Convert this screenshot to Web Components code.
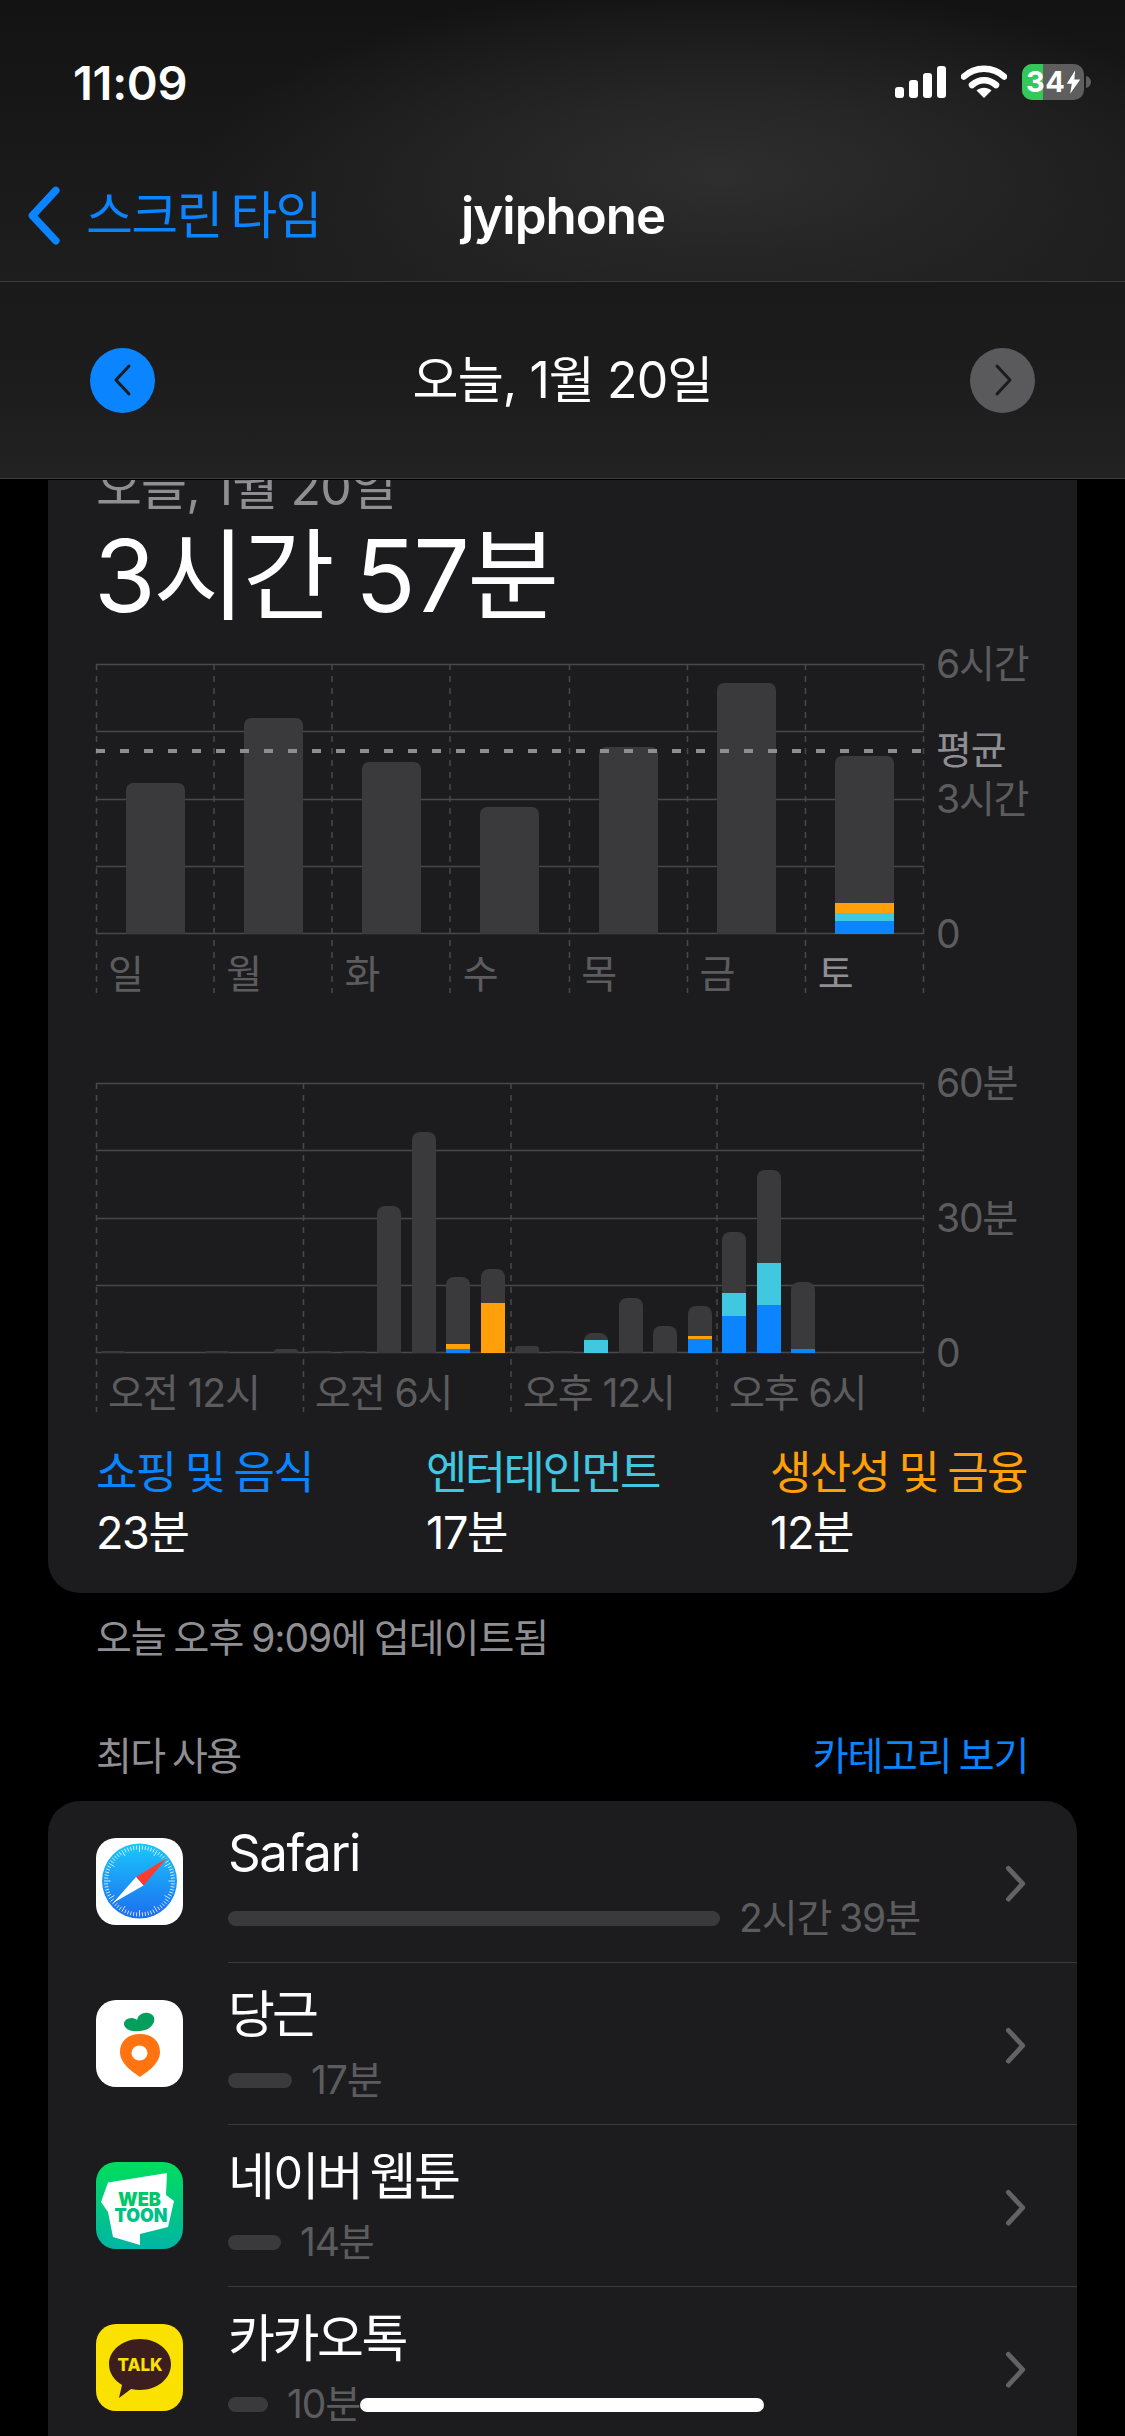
<!DOCTYPE html>
<html lang="ko"><head><meta charset="utf-8"><title>스크린 타임</title>
<style>
html,body{margin:0;padding:0;background:#000}
body{width:1125px;height:2436px;overflow:hidden;font-family:Inter,"Noto Sans CJK KR",sans-serif;color:#fff;position:relative}
</style></head><body>
<screen-header></screen-header>
<screen-main>
  <usage-card></usage-card>
  <list-caption></list-caption>
  <app-list>
    <app-row name="Safari" time="2시간 39분" bar="492" icon="safari" ls="-1.4"></app-row>
    <app-row name="당근" time="17분" bar="64" icon="carrot" ls="-3"></app-row>
    <app-row name="네이버 웹툰" time="14분" bar="53" icon="webtoon" ls="-2.4"></app-row>
    <app-row name="카카오톡" time="10분" bar="40" icon="kakao" ls="-2.4" last></app-row>
  </app-list>
</screen-main>
<home-indicator></home-indicator>
<script>
const FONT='Inter,"Noto Sans CJK KR",sans-serif';
function def(name,css,html,setup){
  customElements.define(name,class extends HTMLElement{
    constructor(){super();this.attachShadow({mode:'open'});}
    connectedCallback(){
      const h=typeof html==='function'?html(this):html;
      this.shadowRoot.innerHTML='<style>'+css+'</style>'+h;
      if(setup)setup(this);
    }
  });
}
const chev=(d,c,w,sw)=>`<svg width="${w}" height="${w*1.7}" viewBox="0 0 20 34" fill="none"><path d="${d==='l'?'M16 3 3 17l13 14':'M4 3l13 14L4 31'}" stroke="${c}" stroke-width="${sw}" stroke-linecap="round" stroke-linejoin="round"/></svg>`;

def('status-bar',`
:host{display:flex;height:164px;box-sizing:border-box;padding:54px 34px 0 73px;justify-content:space-between;align-items:flex-start}
.t{font:600 47px/56px ${FONT};letter-spacing:-.3px;margin-top:1px}
.r{display:flex;align-items:flex-start;gap:15px;padding-top:10px}
.b{position:relative;width:62px;height:36px;border-radius:10px;overflow:hidden;background:#5e5e5e;flex:none}
.b i{position:absolute;left:0;top:0;bottom:0;width:21px;background:#34c759}
.b span{position:absolute;left:4px;top:0;display:flex;align-items:center;height:36px;font:700 29px/36px ${FONT};color:#fff;letter-spacing:.6px}
.b svg{position:absolute;left:44px;top:5px}
.bw{display:flex;align-items:center;gap:2px}
`,`<div class="t">11:09</div><div class="r">
<svg width="51" height="32" viewBox="0 0 51 32" style="margin-top:2px"><rect x="0" y="21" width="9" height="11" rx="3" fill="#fff"/><rect x="14" y="14" width="9" height="18" rx="3" fill="#fff"/><rect x="28" y="7" width="9" height="25" rx="3" fill="#fff"/><rect x="42" y="0" width="9" height="32" rx="3" fill="#fff"/></svg>
<svg width="46" height="33" viewBox="0 0 46 33" style="margin-top:1px"><path d="M3 11.500C14 1 32 1 43 11.500" fill="none" stroke="#fff" stroke-width="6.500" stroke-linecap="round"/><path d="M11 20c7-6.500 17-6.500 24 0" fill="none" stroke="#fff" stroke-width="6.500" stroke-linecap="round"/><path d="M15.500 25.500c4.500-3.800 10.500-3.800 15 0L23 33z" fill="#fff"/></svg>
<div class="bw"><div class="b"><i></i><span>34</span><svg width="15" height="26" viewBox="0 0 18 28"><path d="M11 0 1 16h6l-2 12 12-17h-7z" fill="#fff"/></svg></div><svg width="5" height="12" viewBox="0 0 5 12"><path d="M0 0c3 .8 5 3 5 6s-2 5.200-5 6z" fill="#5e5e5e"/></svg></div>
</div>`);

def('nav-bar',`
:host{display:grid;grid-template-columns:434px auto 1fr;align-items:center;height:118px;box-sizing:border-box;border-bottom:1px solid #3b3b3d;padding:0 0 14px 27px}
.l{display:flex;align-items:center;gap:23px;color:#0a84ff;font:400 51px/60px ${FONT};letter-spacing:-1.7px;word-spacing:-4px;white-space:nowrap}
.c{font:600 51px/60px ${FONT};letter-spacing:-1px}
`,`<div class="l">${chev('l','#0a84ff',36,4.2)}<span>스크린 타임</span></div><div class="c">jyiphone</div><div></div>`);

def('date-bar',`
:host{display:flex;align-items:center;justify-content:space-between;height:197px;box-sizing:border-box;padding:0 90px;border-bottom:1px solid #3b3b3d;background:linear-gradient(180deg,#1a1a1a 0%,#1c1c1c 50%,#222 100%)}
.d{width:65px;height:65px;border-radius:50%;display:flex;align-items:center;justify-content:center}
.a{background:#0a84ff}.g{background:#5a5a5c}
.t{font:400 50px/60px ${FONT};letter-spacing:-.9px;white-space:nowrap}
`,`<div class="d a">${chev('l','#1c1c1e',20,3)}</div><div class="t">오늘, 1월 20일</div><div class="d g">${chev('r','#1c1c1e',20,3)}</div>`);

def('screen-header',`
:host{display:block;height:480px}
.top{height:282px;background:radial-gradient(ellipse 520px 190px at 720px 175px,#2e2e2e 0%,#262626 40%,rgba(32,32,32,0) 100%),linear-gradient(180deg,#131313 0%,#181818 45%,#1e1e1e 100%)}
`,`<div class="top"><status-bar></status-bar><nav-bar></nav-bar></div><date-bar></date-bar>`);

def('screen-main',`
:host{display:block;height:1956px;overflow:hidden;padding:0 48px;box-sizing:border-box}
`,`<slot></slot>`);

const chartCss=`
:host{display:block}
.wrap{display:grid;grid-template-columns:828px 1fr;column-gap:12px;height:329px;margin-left:48px;position:relative}
.plot{position:relative;width:828px;height:329px}
svg.grid{position:absolute;left:0;top:0;width:828px;height:329px;overflow:visible}
.bars{position:absolute;left:0;top:0;width:828px;height:270px;display:grid;align-items:end;justify-items:center}
.bar{display:flex;flex-direction:column;justify-content:flex-end;overflow:hidden;background:#3a3a3c}
.bar i{display:block}
.xl{position:absolute;left:0;top:288px;width:828px;display:grid;font:400 39px/44px ${FONT};color:#5c5c5f;letter-spacing:-1.1px;word-spacing:0;white-space:nowrap}
.xl span{padding-left:12px}
.y{position:relative;height:329px;font:400 39px/50px ${FONT};color:#5c5c5f;letter-spacing:-1.2px}
.y span{position:absolute;left:0;white-space:nowrap;transform:translateY(-50%)}
`;
const C={b:'#0a84ff',c:'#40c8e0',o:'#ff9f0a'};
function grid(xs){
  let s='<svg class="grid" viewBox="0 0 828 329">';
  [0.5,67.5,135.5,202.5,269.5].forEach(y=>s+=`<line x1="0" x2="828" y1="${y}" y2="${y}" stroke="#48484a" stroke-width="1.500"/>`);
  xs.forEach(x=>s+=`<line x1="${x}" x2="${x}" y1="0" y2="329" stroke="#48484a" stroke-width="1.500" stroke-dasharray="6 6"/>`);
  return s+'</svg>';
}
function bar(w,h,segs,r){
  const seg=(segs||[]).map(([c,v])=>`<i style="height:${v}px;background:${C[c]}"></i>`).join('');
  return `<div class="bar" style="width:${w}px;height:${h}px;border-radius:${r}px ${r}px 0 0">${seg}</div>`;
}

def('week-chart',chartCss+`
.avg{position:absolute;left:0;top:85px;width:828px;height:4px;background:repeating-linear-gradient(90deg,#8e8e8e 0 9px,transparent 9px 24px)}
.today{color:#8e8e93}
`,()=>{
  const tops=[151,216,172,127,187,251,178];
  const days=['일','월','화','수','목','금','토'];
  const bars=tops.map((h,i)=>bar(59,h,i===6?[['o',10],['c',8],['b',13]]:[],7)).join('');
  return `<div class="wrap"><div class="plot">${grid([0.5,118,236,354,473.5,591.5,709.5,827.5])}
  <div class="bars" style="grid-template-columns:repeat(7,1fr)">${bars}</div>
  <div class="avg"></div>
  <div class="xl" style="grid-template-columns:repeat(7,1fr)">${days.map((d,i)=>`<span class="${i===6?'today':''}">${d}</span>`).join('')}</div>
  </div><div class="y"><span style="top:0">6시간</span><span style="top:86px;color:#8e8e93">평균</span><span style="top:135px">3시간</span><span style="top:270px">0</span></div></div>`;
});

def('hour-chart',chartCss,()=>{
  const d=[[2],[0],[0],[2],[0],[4],[2],[2],[147],[221],[76,[['o',5],['b',4]]],[84,[['o',50]]],[7],[2],[20,[['c',13]]],[55],[27],[47,[['o',3],['b',14]]],[121,[['c',23],['b',37]]],[183,[['c',42],['b',48]]],[71,[['b',4]]],[0],[0],[0]];
  const bars=d.map(([h,s])=>h?bar(24,h,s,h<8?3:8):'<div></div>').join('');
  return `<div class="wrap"><div class="plot">${grid([0.5,207.5,415,621,827.5])}
  <div class="bars" style="grid-template-columns:repeat(24,1fr)">${bars}</div>
  <div class="xl" style="grid-template-columns:207px 208px 206px 207px"><span>오전 12시</span><span>오전 6시</span><span>오후 12시</span><span>오후 6시</span></div>
  </div><div class="y"><span style="top:0">60분</span><span style="top:135px">30분</span><span style="top:270px">0</span></div></div>`;
});

def('legend-item',`
:host{display:block;font:400 45px/60px ${FONT};letter-spacing:var(--ls,-1.6px);word-spacing:-2px;white-space:nowrap}
.a{color:var(--c)}
`,el=>`<div class="a" style="--c:${el.getAttribute('color')}">${el.getAttribute('label')}</div><div style="letter-spacing:-1.4px">${el.getAttribute('value')}</div>`);

def('usage-card',`
:host{display:block;background:#1c1c1e;border-radius:0 0 32px 32px;margin-top:-60px;padding:39px 0 30px}
.d{font:400 50px/56px ${FONT};color:#8e8e93;margin-left:48px;letter-spacing:-.9px;white-space:nowrap}
.h{font:400 100px/120px ${FONT};margin:1px 0 28px 46px;letter-spacing:-2.5px;word-spacing:-3px;white-space:nowrap}
hour-chart{margin-top:90px}
.lg{display:grid;grid-template-columns:330px 344px auto;margin:31px 0 0 48px}
`,`<div class="d">오늘, 1월 20일</div><div class="h">3시간 57분</div><week-chart></week-chart><hour-chart></hour-chart>
<div class="lg"><legend-item color="#0a84ff" label="쇼핑 및 음식" value="23분"></legend-item><legend-item style="--ls:-2.6px" color="#40c8e0" label="엔터테인먼트" value="17분"></legend-item><legend-item color="#ff9f0a" label="생산성 및 금융" value="12분"></legend-item></div>`);

def('list-caption',`
:host{display:block;font:400 39px/50px ${FONT};color:#8e8e93;letter-spacing:-1.05px;word-spacing:-2px;padding:0 49px 0 48px}
.s{display:flex;justify-content:space-between;margin-top:68px;margin-bottom:20px}
.u{margin-top:20px}
.k{color:#0a84ff;letter-spacing:-1.3px}
.m{letter-spacing:-1.6px}
`,`<div class="u">오늘 오후 9:09에 업데이트됨</div><div class="s"><span class="m">최다 사용</span><span class="k">카테고리 보기</span></div>`);

def('app-list',`:host{display:block;background:#1c1c1e;border-radius:32px 32px 0 0;overflow:hidden}`,`<slot></slot>`);

const ticks=(()=>{let s='';for(let i=0;i<72;i++){const a=i*5*Math.PI/180,r1=i%6?31.5:29,r2=35.5;s+=`<line x1="${(43.5+r1*Math.cos(a)).toFixed(2)}" y1="${(43+r1*Math.sin(a)).toFixed(2)}" x2="${(43.5+r2*Math.cos(a)).toFixed(2)}" y2="${(43+r2*Math.sin(a)).toFixed(2)}"/>`;}return s;})();
const ICONS={
safari:`<rect width="87" height="87" rx="20" fill="#fff"/><defs><linearGradient id="s" x1="0" y1="0" x2="0" y2="1"><stop offset="0" stop-color="#1ac8fc"/><stop offset="1" stop-color="#1d6cf0"/></linearGradient></defs><circle cx="43.500" cy="43" r="37.500" fill="url(#s)"/><g stroke="#fff" stroke-width="1" opacity=".8">${ticks}</g><path d="M71 20 47.500 47.500 40 39z" fill="#ff3b30"/><path d="M17 65 40 39 47.500 47.500z" fill="#fff"/>`,
carrot:`<rect width="87" height="87" rx="20" fill="#fff"/><path d="M29 27c-3-5 1-9 7-9 2 0 4 1 5 2 1-5 6-8 11-7 6 1 8 6 5 11-3 5-9 7-14 7-5 1-11 0-14-4z" fill="#069e5c"/><path d="M44 34c12 0 20 7 20 18 0 12-13 20-20 25-7-5-20-13-20-25 0-11 8-18 20-18z" fill="#ff7410"/><ellipse cx="43.500" cy="53" rx="8" ry="7.500" fill="#fff"/>`,
webtoon:`<defs><linearGradient id="w" x1="0" y1="0" x2="0" y2="1"><stop offset="0" stop-color="#00dd5c"/><stop offset="1" stop-color="#00b5a5"/></linearGradient></defs><rect width="87" height="87" rx="20" fill="url(#w)"/><path d="M12 20.500 71 11l-1 22 8 6-6 26-28 7v11l-27-8-5-25-7-10z" fill="#fff"/><text x="43.500" y="44" text-anchor="middle" font-family="Inter,sans-serif" font-weight="900" font-size="19" fill="#00c76a" textLength="43" lengthAdjust="spacingAndGlyphs">WEB</text><text x="45" y="59.500" text-anchor="middle" font-family="Inter,sans-serif" font-weight="900" font-size="19" fill="#00c08a" textLength="53" lengthAdjust="spacingAndGlyphs">TOON</text>`,
kakao:`<rect width="87" height="87" rx="20" fill="#fae100"/><path d="M44 15c17 0 31 11 31 25 0 15-14 26-31 26-3 0-6-.4-9-1l-12 9 3-13C18 56 13 49 13 40c0-14 14-25 31-25z" fill="#3c1e1e"/><text x="44" y="47" text-anchor="middle" font-family="Inter,sans-serif" font-weight="800" font-size="18" fill="#fae100" textLength="45" lengthAdjust="spacingAndGlyphs">TALK</text>`
};

def('app-row',`
:host{display:flex;height:162px;padding-left:48px;box-sizing:border-box}
.i{width:87px;height:87px;margin-top:37px;flex:none}
.i svg{display:block}
.m{flex:1;margin-left:45px;display:flex;align-items:flex-start;box-sizing:border-box;height:162px;border-bottom:1px solid var(--sep,#3a3a3c)}
.x{flex:1;padding-top:22px}
.n{font:400 51px/60px ${FONT};word-spacing:-4px}
.p{display:flex;align-items:center;gap:19px;height:50px;margin-top:10px;font:400 39px/50px ${FONT};color:#5c5c5f;letter-spacing:-1.1px;word-spacing:-2px;white-space:nowrap}
.p i{display:block;height:15px;border-radius:8px;background:#3a3a3c}
.c{flex:none;width:73px;margin-top:64px}
`,el=>`<div class="i"><svg width="87" height="87" viewBox="0 0 87 87" role="img" aria-label="${el.getAttribute('name')}">${ICONS[el.getAttribute('icon')]}</svg></div>
<div class="m" style="${el.hasAttribute('last')?'--sep:transparent':''}"><div class="x"><div class="n" style="letter-spacing:${el.getAttribute('ls')}px">${el.getAttribute('name')}</div><div class="p"><i style="width:${el.getAttribute('bar')}px"></i><span>${el.getAttribute('time')}</span></div></div><div class="c">${chev('r','#636366',22,4.4)}</div></div>`);

def('home-indicator',`:host{display:block;position:absolute;left:360px;top:2398px;width:404px;height:14px;border-radius:7px;background:#fff}`,``);
</script>
</body></html>
